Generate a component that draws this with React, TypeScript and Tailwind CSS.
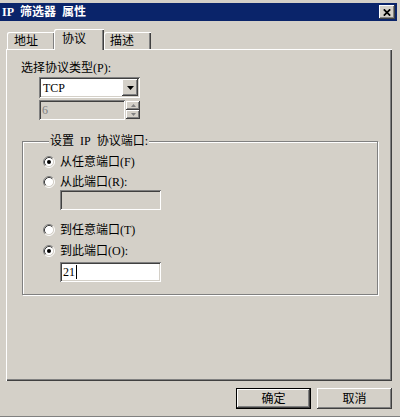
import React from "react";

const raised =
  "shadow-[inset_-1px_-1px_#404040,inset_1px_1px_#ffffff,inset_-2px_-2px_#808080,inset_2px_2px_#d4d0c8]";
const sunken =
  "shadow-[inset_1px_1px_#808080,inset_-1px_-1px_#ffffff,inset_2px_2px_#404040,inset_-2px_-2px_#d4d0c8]";

function Radio({ checked }: { checked?: boolean }) {
  return (
    <svg width="12" height="12" viewBox="0 0 12 12" className="shrink-0">
      <circle cx="6" cy="6" r="4.5" fill="#ffffff" />
      <path d="M2.11 9.89 A5.5 5.5 0 0 1 9.89 2.11" fill="none" stroke="#808080" strokeWidth="1" />
      <path d="M9.89 2.11 A5.5 5.5 0 0 1 2.11 9.89" fill="none" stroke="#ffffff" strokeWidth="1" />
      <path d="M2.82 9.18 A4.5 4.5 0 0 1 9.18 2.82" fill="none" stroke="#404040" strokeWidth="1" />
      <path d="M9.18 2.82 A4.5 4.5 0 0 1 2.82 9.18" fill="none" stroke="#d4d0c8" strokeWidth="1" />
      {checked && <circle cx="6" cy="6" r="2" fill="#000000" />}
    </svg>
  );
}

function RadioRow({ label, checked, className }: { label: string; checked?: boolean; className?: string }) {
  return (
    <div className={"flex items-center h-[16px] " + (className ?? "")}>
      <Radio checked={checked} />
      <span className="ml-[5px] whitespace-nowrap">{label}</span>
    </div>
  );
}

export default function App() {
  return (
    <div className="w-[400px] h-[417px] bg-[#d4d0c8] pt-[3px] pr-[3px] flex flex-col text-[12px] leading-[14px] text-black font-[family-name:'Liberation_Serif','Noto_Sans_CJK_SC',serif] border-b border-[#808080] overflow-hidden">
      {/* Title bar */}
      <div className="h-[18px] bg-[#0a246a] flex items-center justify-between pl-[2px] pr-[2px]">
        <span className="text-white font-bold whitespace-nowrap">{"IP\u2002筛选器\u2002属性"}</span>
        <div className={"w-[16px] h-[14px] bg-[#d4d0c8] flex items-center justify-center " + raised}>
          <svg width="8" height="7" viewBox="0 0 8 7">
            <path d="M0.8 0.3 L7.2 6.7 M7.2 0.3 L0.8 6.7" stroke="#000" strokeWidth="1.7" />
          </svg>
        </div>
      </div>

      {/* Tabs + panel */}
      <div className="ml-[6px] w-[386px] mt-[8px] flex flex-col">
        <div className="relative z-10 flex items-end pl-[1px]">
          <div className="w-[47px] h-[17px] pl-[7px] pt-[2px] rounded-tl-[2px] shadow-[inset_1px_1px_#ffffff,inset_-1px_0_#808080]">
            地址
          </div>
          <div className="w-[50px] h-[21px] -mb-[1px] pl-[8px] pt-[3px] bg-[#d4d0c8] rounded-tl-[2px] shadow-[inset_1px_1px_#ffffff,inset_-1px_0_#404040,inset_-2px_0_#808080]">
            协议
          </div>
          <div className="w-[47px] h-[17px] pl-[6px] pt-[2px] rounded-tl-[2px] shadow-[inset_1px_1px_#ffffff,inset_-1px_0_#404040,inset_-2px_0_#808080]">
            描述
          </div>
        </div>

        <div className="h-[332px] flex flex-col items-start shadow-[inset_1px_1px_#ffffff,inset_-1px_-1px_#404040,inset_-2px_-2px_#808080]">
          <div className="ml-[15px] mt-[12px] whitespace-nowrap">选择协议类型(P):</div>

          {/* Select */}
          <div className={"ml-[33px] mt-[2px] w-[101px] h-[21px] bg-white p-[2px] flex " + sunken}>
            <div className="flex-1 pl-[2px] flex items-center">TCP</div>
            <div className={"w-[16px] h-full bg-[#d4d0c8] flex items-center justify-center " + raised}>
              <svg width="7" height="4" viewBox="0 0 7 4">
                <polygon points="0,0 7,0 3.5,4" fill="#000" />
              </svg>
            </div>
          </div>

          {/* Spin (disabled) */}
          <div className="ml-[33px] mt-[2px] w-[101px] h-[20px] flex">
            <div className={"w-[86px] h-full bg-[#d4d0c8] pl-[3px] flex items-center text-[#808080] " + sunken}>6</div>
            <div className="flex-1 flex flex-col pt-[1px] pl-[1px]">
              <div className={"h-[9px] flex items-center justify-center " + raised}>
                <svg width="5" height="3" viewBox="0 0 5 3">
                  <polygon points="2.5,0 5,3 0,3" fill="#808080" />
                </svg>
              </div>
              <div className={"h-[9px] flex items-center justify-center " + raised}>
                <svg width="5" height="3" viewBox="0 0 5 3">
                  <polygon points="0,0 5,0 2.5,3" fill="#808080" />
                </svg>
              </div>
            </div>
          </div>

          {/* Group box */}
          <fieldset className="ml-[16px] mt-[14px] w-[356px] border border-[#808080] shadow-[inset_1px_1px_#ffffff,1px_1px_#ffffff] pl-[20px] pb-[12px] flex flex-col items-start">
            <legend className="ml-[6px] px-[1px] h-[14px] bg-[#d4d0c8] whitespace-nowrap">{"设置\u2002IP\u2002协议端口:"}</legend>
            <RadioRow className="mt-[6px]" label="从任意端口(F)" checked />
            <RadioRow className="mt-[4px]" label="从此端口(R):" />
            <div className={"ml-[17px] w-[101px] h-[20px] bg-[#d4d0c8] " + sunken} />
            <RadioRow className="mt-[12px]" label="到任意端口(T)" />
            <RadioRow className="mt-[5px]" label="到此端口(O):" checked />
            <div className={"ml-[17px] mt-[3px] w-[101px] h-[20px] bg-white pl-[3px] flex items-center " + sunken}>
              <span>21</span>
              <span className="w-[1px] h-[14px] bg-black ml-[1px]" />
            </div>
          </fieldset>
        </div>
      </div>

      {/* Buttons */}
      <div className="mt-[7px] flex justify-end gap-[6px] mr-[5px]">
        <div className="w-[75px] h-[21px] border border-black">
          <div className={"w-full h-full flex items-center justify-center " + raised}>确定</div>
        </div>
        <div className={"w-[75px] h-[21px] flex items-center justify-center " + raised}>取消</div>
      </div>
    </div>
  );
}
